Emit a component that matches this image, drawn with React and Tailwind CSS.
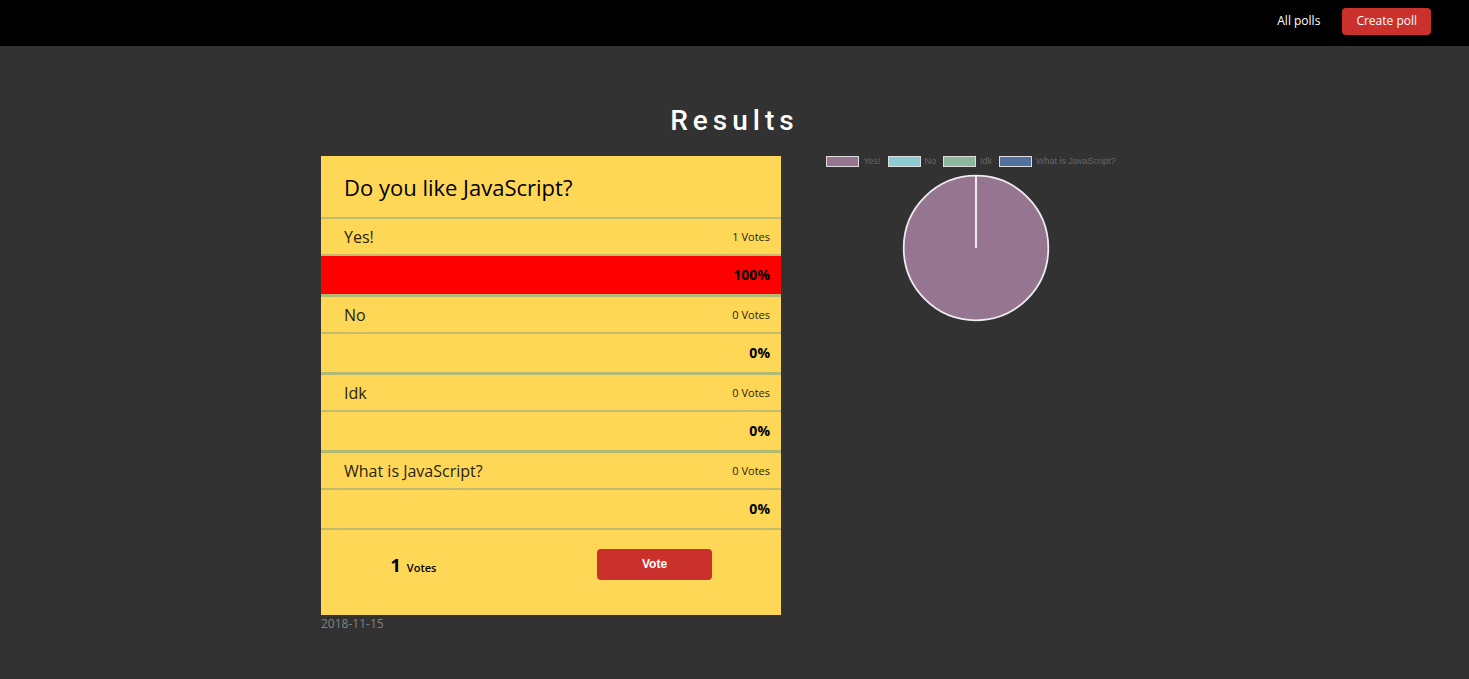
const SLICES = [
  { label: "Yes!", votes: 1, swatch: "bg-[#95758f]" },
  { label: "No", votes: 0, swatch: "bg-[#8fcbd2]" },
  { label: "Idk", votes: 0, swatch: "bg-[#8bb89c]" },
  { label: "What is JavaScript?", votes: 0, swatch: "bg-[#52719f]" },
];

const TOTAL = SLICES.reduce((sum, option) => sum + option.votes, 0);

function Header() {
  return (
    <header className="bg-black">
      <nav className="flex h-[46px] items-center justify-end gap-[22px] pr-[38px] pb-1 text-[12px] text-white">
        <a href="#polls">All polls</a>
        <a
          href="#create"
          className="flex h-[27px] items-center rounded bg-[#ca302c] px-[14px]"
        >
          Create poll
        </a>
      </nav>
    </header>
  );
}

function Option({ label, votes }) {
  const percent = Math.round((votes / TOTAL) * 100);
  return (
    <li className="border-b-3 border-[#b3b873] last:border-b-2 last:border-[#c4bc6d]">
      <div className="flex h-[37px] items-center justify-between border-b-2 border-[#c4bc6d] pt-px pr-[11px] pl-[23px]">
        <span className="text-[16px] text-[#29240f]">{label}</span>
        <span className="text-[11px] text-[#29240f]">{votes} Votes</span>
      </div>
      <div className="grid h-[38px]">
        <div
          className="col-start-1 row-start-1 bg-[#ff0000]"
          style={{ width: `${percent}%` }}
        />
        <span className="col-start-1 row-start-1 self-center pr-[11px] pb-[2px] text-right text-[14px] font-bold">
          {percent}%
        </span>
      </div>
    </li>
  );
}

function PollCard() {
  return (
    <section>
      <div className="bg-[#ffd757] text-black">
        <h2 className="flex h-[63px] items-center border-b-2 border-[#c4bc6d] pt-[2px] pl-[23px] text-[22px]">
          Do you like JavaScript?
        </h2>
        <ul>
          {SLICES.map((option) => (
            <Option key={option.label} {...option} />
          ))}
        </ul>
        <div className="grid h-[85px] grid-cols-2 items-start px-[23px] pt-[19px]">
          <p className="flex items-baseline justify-center gap-[6px] pt-[3px] pr-[68px] text-[11px] font-semibold">
            <span className="text-[18px] font-bold">{TOTAL}</span>
            Votes
          </p>
          <button
            type="button"
            className="ml-[46px] h-[31px] w-[115px] rounded bg-[#ca302c] pb-[2px] font-['Liberation_Sans',Arial,sans-serif] text-[12px] font-bold text-white"
          >
            Vote
          </button>
        </div>
      </div>
      <time dateTime="2018-11-15" className="block text-[12px] leading-[18px] text-[#828282]">
        2018-11-15
      </time>
    </section>
  );
}

function Chart() {
  return (
    <section aria-label="Vote distribution">
      <ul className="flex h-[11px] items-center justify-center gap-[7px] pr-[9px] font-['Liberation_Sans',Arial,sans-serif] text-[9px] leading-[11px] whitespace-nowrap text-[#666666]">
        {SLICES.map(({ label, swatch }) => (
          <li key={label} className="flex items-center gap-1">
            <span className={`h-[11px] w-[33px] border border-[#dddddd] ${swatch}`} />
            {label}
          </li>
        ))}
      </ul>
      <svg viewBox="0 0 148 148" className="mx-auto mt-[7px] block size-[148px]" aria-hidden="true">
        <circle cx="74" cy="74" r="72.3" fill="#95758f" stroke="#eeeaed" strokeWidth="1.8" />
        <path d="M74 1.5V74" stroke="#eeeaed" strokeWidth="2" />
      </svg>
    </section>
  );
}

export default function App() {
  return (
    <div className="min-h-screen bg-[#323232] font-['Open_Sans','Noto_Sans',sans-serif]">
      <Header />
      <main className="mx-auto max-w-[827px] pt-[57px] pb-[45px]">
        <h1 className="mb-[17px] text-center font-['Roboto',sans-serif] text-[28px] leading-[36px] font-medium tracking-[5px] text-white">
          Results
        </h1>
        <div className="grid grid-cols-[4fr_3fr] gap-[22px]">
          <PollCard />
          <Chart />
        </div>
      </main>
    </div>
  );
}
